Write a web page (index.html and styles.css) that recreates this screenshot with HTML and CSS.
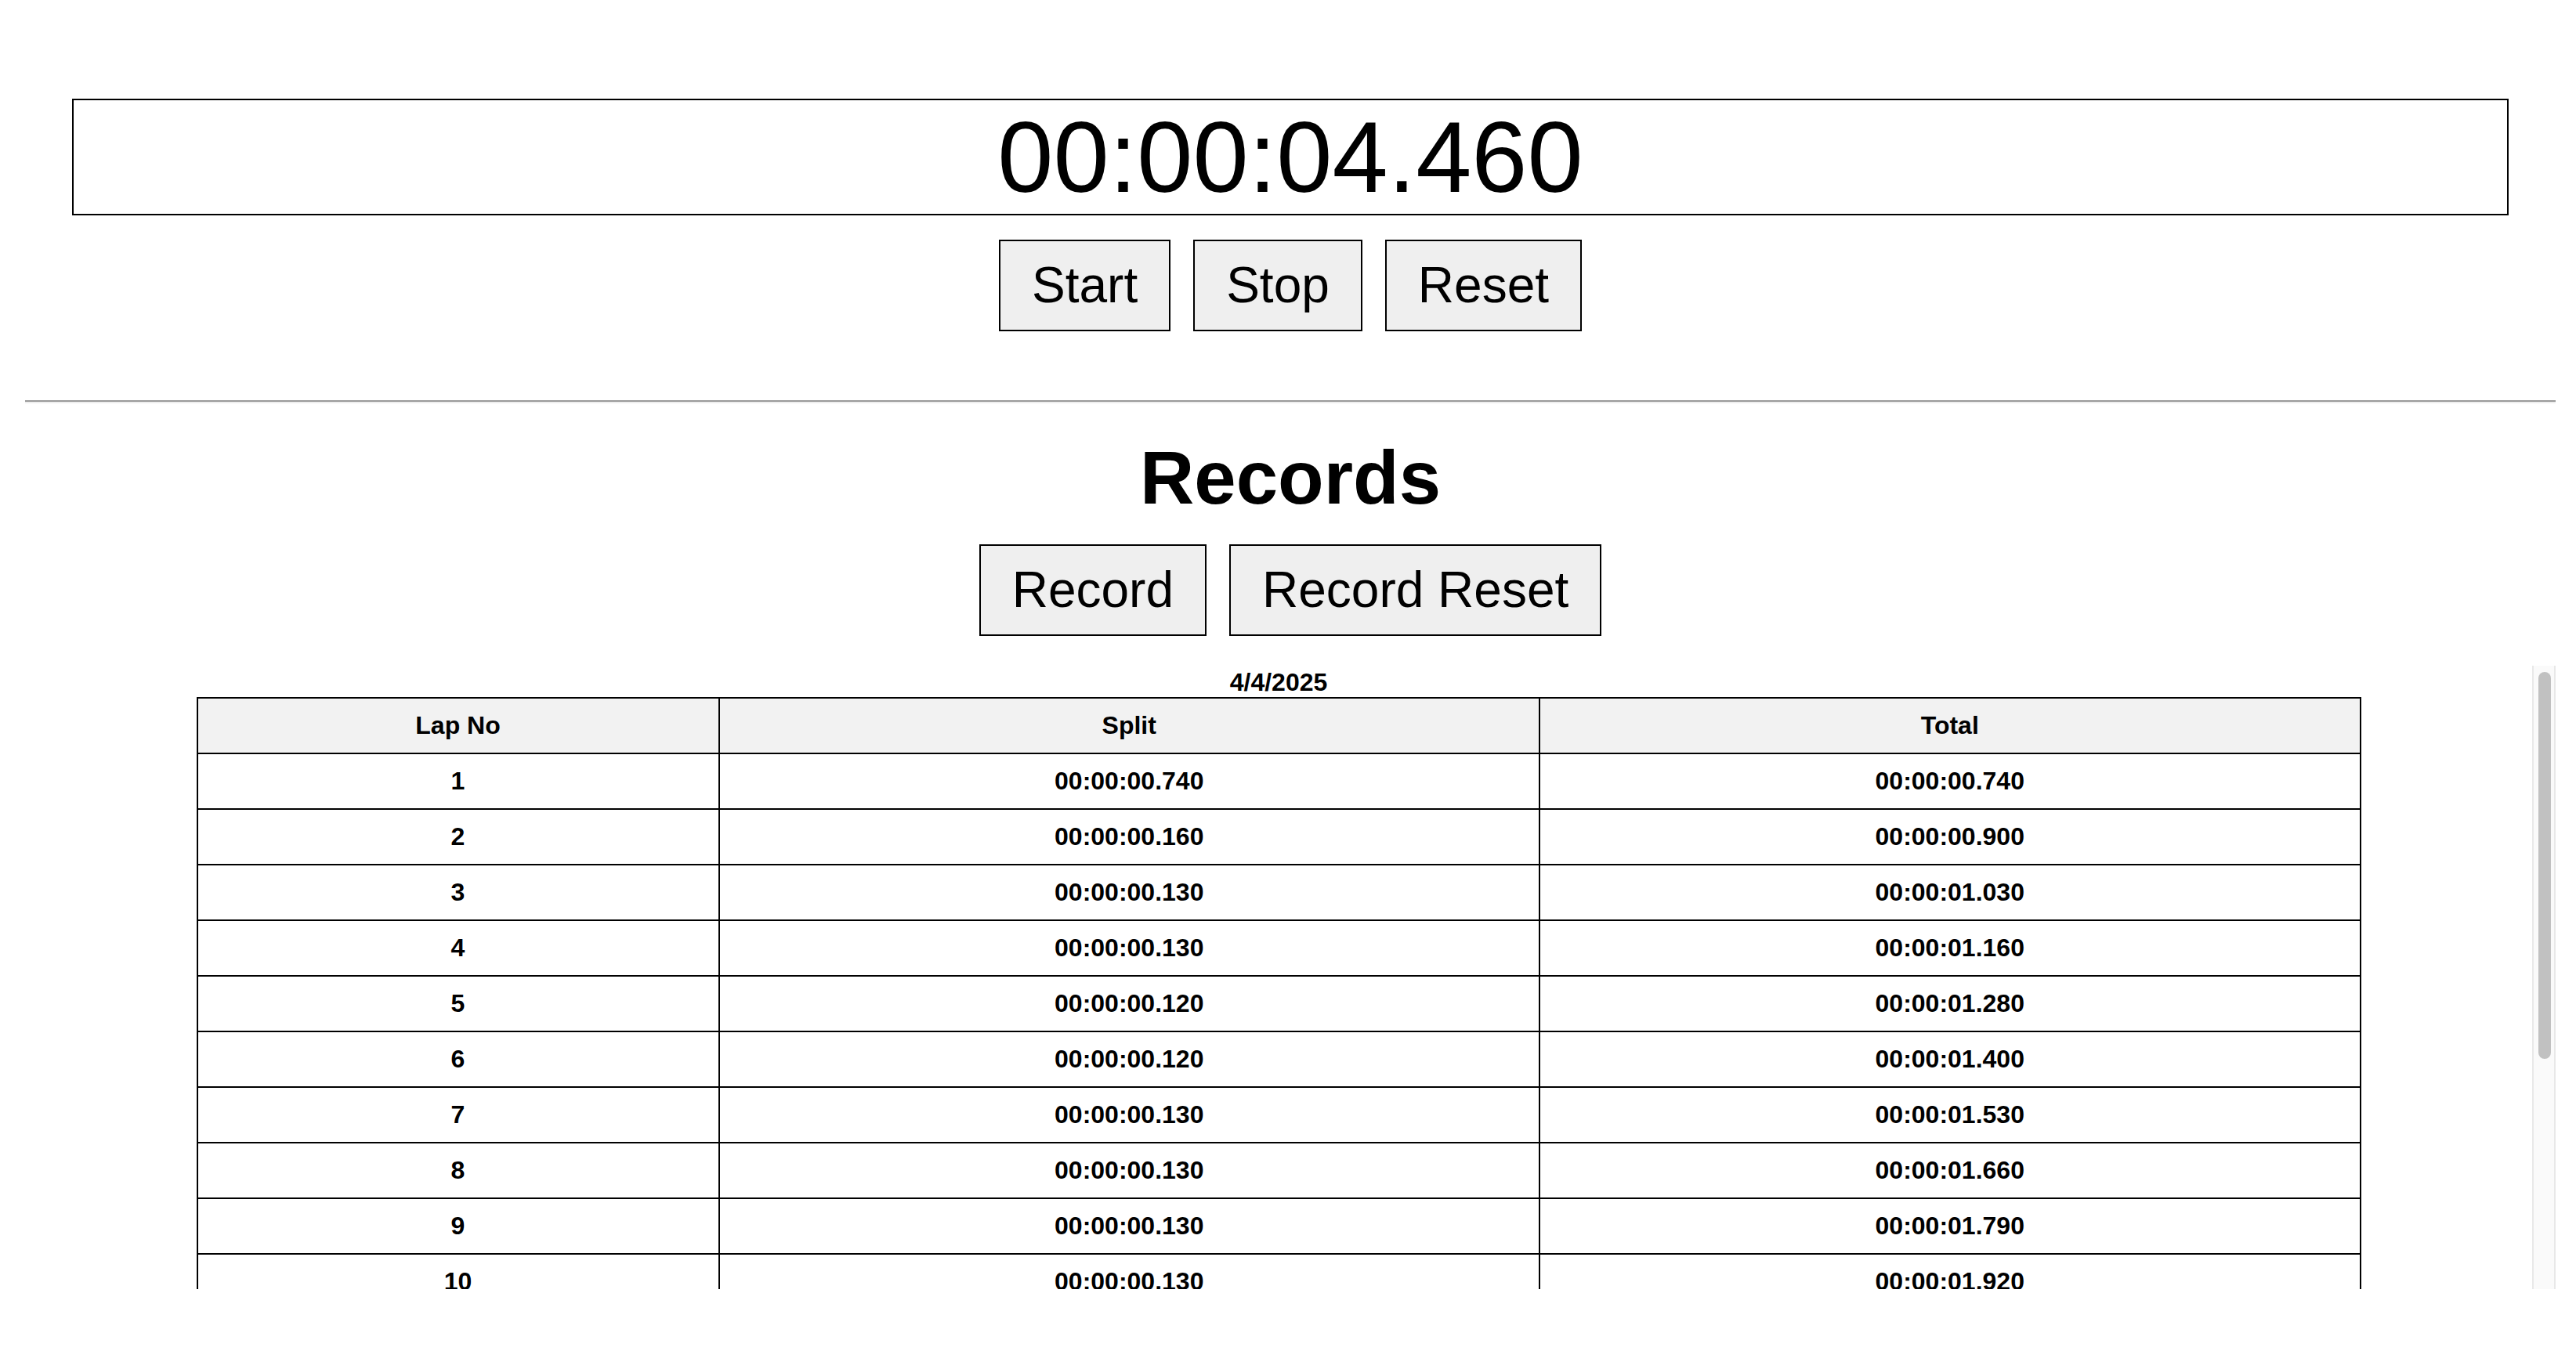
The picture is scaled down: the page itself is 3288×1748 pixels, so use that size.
FILE: index.html
```html
<!DOCTYPE html>
<html lang="en">
<head>
<meta charset="utf-8">
<title>Stopwatch</title>
<link rel="stylesheet" href="styles.css">
</head>
<body>
<div class="page">
  <div class="timer">00:00:04.460</div>
  <div class="controls">
    <button class="btn">Start</button>
    <button class="btn">Stop</button>
    <button class="btn">Reset</button>
  </div>
  <hr class="divider">
  <h1 class="title">Records</h1>
  <div class="controls controls-records">
    <button class="btn">Record</button>
    <button class="btn">Record Reset</button>
  </div>
  <div class="records-wrap">
    <div class="records">
      <table class="laps">
        <caption class="date">4/4/2025</caption>
        <colgroup>
          <col class="col-lap">
          <col>
          <col>
        </colgroup>
        <thead>
          <tr><th>Lap No</th><th>Split</th><th>Total</th></tr>
        </thead>
        <tbody>
          <tr><td>1</td><td>00:00:00.740</td><td>00:00:00.740</td></tr>
          <tr><td>2</td><td>00:00:00.160</td><td>00:00:00.900</td></tr>
          <tr><td>3</td><td>00:00:00.130</td><td>00:00:01.030</td></tr>
          <tr><td>4</td><td>00:00:00.130</td><td>00:00:01.160</td></tr>
          <tr><td>5</td><td>00:00:00.120</td><td>00:00:01.280</td></tr>
          <tr><td>6</td><td>00:00:00.120</td><td>00:00:01.400</td></tr>
          <tr><td>7</td><td>00:00:00.130</td><td>00:00:01.530</td></tr>
          <tr><td>8</td><td>00:00:00.130</td><td>00:00:01.660</td></tr>
          <tr><td>9</td><td>00:00:00.130</td><td>00:00:01.790</td></tr>
          <tr><td>10</td><td>00:00:00.130</td><td>00:00:01.920</td></tr>
          <tr><td>11</td><td>00:00:00.130</td><td>00:00:02.050</td></tr>
          <tr><td>12</td><td>00:00:00.120</td><td>00:00:02.170</td></tr>
          <tr><td>13</td><td>00:00:00.130</td><td>00:00:02.300</td></tr>
          <tr><td>14</td><td>00:00:00.130</td><td>00:00:02.430</td></tr>
          <tr><td>15</td><td>00:00:00.120</td><td>00:00:02.550</td></tr>
          <tr><td>16</td><td>00:00:00.130</td><td>00:00:02.680</td></tr>
        </tbody>
      </table>
    </div>
    <div class="scrollbar" aria-hidden="true"><div class="scrollbar-thumb"></div></div>
  </div>
</div>
</body>
</html>
```

FILE: styles.css
```css
html, body {
  margin: 0;
  padding: 0;
  background: #ffffff;
}

body {
  font-family: "Liberation Sans", Arial, sans-serif;
  color: #000000;
}

.page {
  padding: 126px 26px 0 32px;
}

.timer {
  margin: 0 60px;
  border: 2px solid #000000;
  height: 145px;
  font-size: 128px;
  line-height: 145px;
  text-align: center;
  white-space: nowrap;
}

.controls {
  display: flex;
  justify-content: center;
  gap: 29px;
  margin-top: 31px;
}

.btn {
  font-family: "Liberation Sans", Arial, sans-serif;
  font-size: 64px;
  line-height: 73px;
  padding: 20px 40px;
  border: 2px solid #000000;
  background: #efefef;
  color: #000000;
  border-radius: 0;
  margin: 0;
}

.divider {
  margin: 88px 0 0 0;
  height: 0;
  border: 0;
  border-top: 2px solid #9a9a9a;
  border-bottom: 2px solid #eeeeee;
}

.title {
  margin: 40px 0 0 0;
  font-size: 96px;
  line-height: 110px;
  font-weight: bold;
  text-align: center;
}

.controls-records {
  margin-top: 30px;
}

.records-wrap {
  position: relative;
  margin-top: 38px;
  height: 796px;
}

.records {
  height: 100%;
  overflow-y: scroll;
  scrollbar-width: none;
  padding: 3px 30px 0 0;
  box-sizing: border-box;
}

.records::-webkit-scrollbar {
  display: none;
}

.scrollbar {
  position: absolute;
  top: 0;
  right: 0;
  bottom: 0;
  width: 26px;
  background: #fafafa;
  border-left: 2px solid #e8e8e8;
  border-right: 2px solid #e8e8e8;
}

.scrollbar-thumb {
  position: absolute;
  top: 8px;
  left: 6px;
  width: 16px;
  height: 494px;
  border-radius: 8px;
  background: #c1c1c1;
}

.laps {
  width: 2763px;
  margin: 0 auto;
  border-collapse: collapse;
  table-layout: fixed;
  font-size: 32px;
  font-weight: bold;
}

.date {
  font-size: 32px;
  line-height: 37px;
  font-weight: bold;
  text-align: center;
}

.col-lap {
  width: 666px;
}

.laps th,
.laps td {
  border: 2px solid #000000;
  padding: 16px;
  line-height: 37px;
  text-align: center;
  font-weight: bold;
}

.laps th {
  background: #f2f2f2;
}
```
